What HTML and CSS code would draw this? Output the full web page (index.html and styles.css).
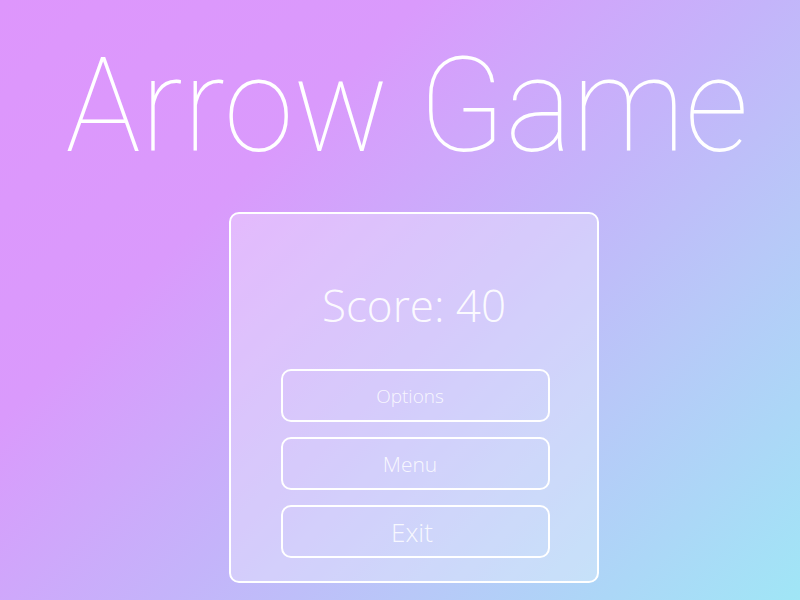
FILE: index.html
```html
<!DOCTYPE html>
<html>
<head>
<meta charset="utf-8">
<link rel="stylesheet" href="styles.css">
</head>
<body>
<div class="page">
  <h1 class="title">Arrow Game</h1>
  <div class="card">
    <div class="score">Score: 40</div>
    <div class="buttons">
      <button class="btn btn-options">Options</button>
      <button class="btn btn-menu">Menu</button>
      <button class="btn btn-exit">Exit</button>
    </div>
  </div>
</div>
</body>
</html>
```
FILE: styles.css
```css
html, body {
  margin: 0;
  padding: 0;
  width: 800px;
  height: 600px;
  overflow: hidden;
}
body {
  background: linear-gradient(135deg, #de96fc 0%, #da9afc 30%, #c4b4fa 55%, #b8c8f8 72%, #a0e6f6 100%);
  font-family: "Open Sans", sans-serif;
  color: #fff;
}
.page {
  display: flex;
  flex-direction: column;
  width: 800px;
  height: 600px;
}
.title {
  margin: 0;
  padding: 33px 0 0 14px;
  height: 182px;
  box-sizing: border-box;
  text-align: center;
  font-family: "Roboto", sans-serif;
  font-weight: 100;
  font-size: 132px;
  line-height: 146px;
  color: #fff;
  transform: scaleX(0.955);
  transform-origin: 407px 0;
}
.card {
  margin: 30px 0 0 229px;
  width: 370px;
  height: 371px;
  box-sizing: border-box;
  border: 2px solid #fff;
  border-radius: 10px;
  background: rgba(255, 255, 255, 0.3);
  display: flex;
  flex-direction: column;
  align-items: center;
}
.score {
  margin-top: 61px;
  font-weight: 300;
  font-size: 44px;
  line-height: 60px;
  color: rgba(255, 255, 255, 0.92);
}
.buttons {
  margin-top: 34px;
  margin-left: 2px;
  display: flex;
  flex-direction: column;
  gap: 15px;
}
.btn {
  width: 269px;
  height: 53px;
  box-sizing: border-box;
  border: 2px solid #fff;
  border-radius: 10px;
  background: transparent;
  color: rgba(255, 255, 255, 0.85);
  font-family: "Open Sans", sans-serif;
  font-weight: 300;
  padding: 0 10px 0 0;
}
.btn-options { font-size: 19px; }
.btn-menu { font-size: 21px; }
.btn-exit { font-size: 26px; padding-right: 6px; }
```
